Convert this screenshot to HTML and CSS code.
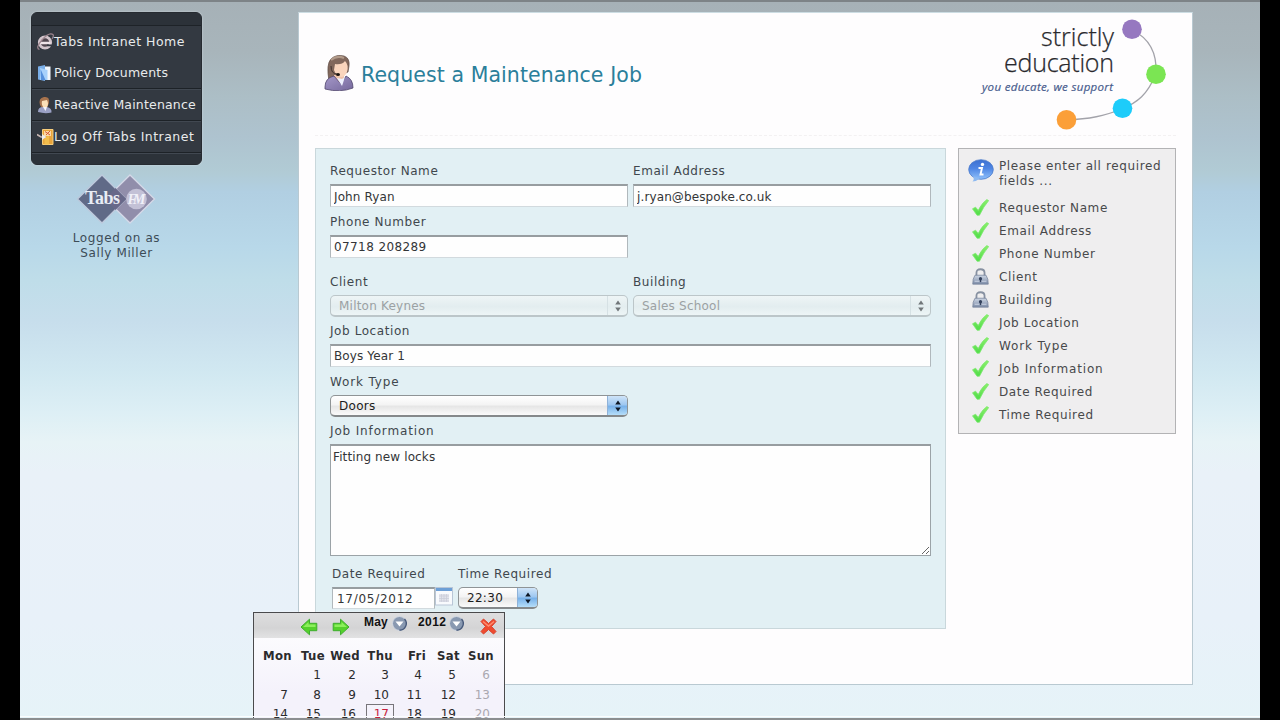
FILE: index.html
```html
<!DOCTYPE html>
<html lang="en">
<head>
<meta charset="utf-8">
<title>Request a Maintenance Job</title>
<link rel="stylesheet" href="styles.css">
</head>
<body>
<svg class="defs" width="0" height="0">
  <defs>
    <linearGradient id="green" x1="0" y1="0" x2="0" y2="1"><stop offset="0" stop-color="#8df06c"/><stop offset="1" stop-color="#4fdc48"/></linearGradient>
    <linearGradient id="purple" x1="0" y1="0" x2="1" y2="1"><stop offset="0" stop-color="#a598c8"/><stop offset="1" stop-color="#75689c"/></linearGradient>
    <linearGradient id="steel" x1="0" y1="0" x2="0" y2="1"><stop offset="0" stop-color="#ccd5e3"/><stop offset="1" stop-color="#7c8ba7"/></linearGradient>
    <linearGradient id="bubble" x1="0" y1="0" x2="0" y2="1"><stop offset="0" stop-color="#3c6fd0"/><stop offset=".45" stop-color="#4f86e4"/><stop offset="1" stop-color="#8fc0fa"/></linearGradient>
    <symbol id="tick" viewBox="0 0 17 17"><path d="M.5 9.800 3.600 8.200 6.200 11.400Q9.500 4.500 14.800.600L16.700 1.600Q11.500 7.500 7.500 16.200L5 16.200Z" fill="url(#green)" stroke="#7be86d" stroke-width=".8"/></symbol>
    <symbol id="lock" viewBox="0 0 16 16"><path d="M4.200 8V4.500Q4.200 1.200 8 1.200T11.800 4.500V8" fill="none" stroke="#8791a1" stroke-width="1.700"/><path d="M2.800 6.800H13.200Q15.500 10 15.300 15.200H.7Q.5 10 2.800 6.800Z" fill="url(#steel)" stroke="#75829a" stroke-width=".7"/><path d="M2.500 12.500H13.500" stroke="#dbe2ed" stroke-width=".7"/><circle cx="8" cy="10" r="1.500" fill="#34415c"/><path d="M7.300 11h1.400v2.300H7.300z" fill="#34415c"/></symbol>
    <symbol id="person" viewBox="0 0 30 36">
      <path d="M5 26Q2 9 7 4Q12-1 20 1Q26 3 25 11L24 17 12 22Z" fill="#82685c" stroke="#5d4a44" stroke-width=".7"/>
      <path d="M10 20H20V28H10Z" fill="#efc3aa"/>
      <path d="M11 9Q18 10 21 6Q25 10 23 17Q21 22 17 22Q12 21 10 15Z" fill="#fad5bd"/>
      <path d="M7 5Q13 0 20 3" stroke="#b29b8a" stroke-width="2" fill="none"/>
      <path d="M1 32Q1 23 10 21L17 29 22 21Q29 24 29 33Q16 38 1 34Z" fill="url(#purple)" stroke="#51466d" stroke-width=".8"/>
      <path d="M13 23 18 31 21 22 18 24Z" fill="#eef1ff"/>
      <ellipse cx="14" cy="19.500" rx="2" ry="1.600" fill="#19130f"/><path d="M7 11Q7 19 13 19" fill="none" stroke="#41332f"/>
    </symbol>
    <symbol id="drop" viewBox="0 0 15 15"><circle cx="7.500" cy="7.500" r="7" fill="#8999b1" stroke="#d3d9e2"/><path d="M7.500 14.200A6.700 6.700 0 0 0 12.500 3" fill="none" stroke="#47597a" stroke-width="1.400"/><path d="M3.500 5.500H11.500L7.500 10.500Z" fill="#fff"/></symbol>
    <symbol id="arrow" viewBox="0 0 18 18"><path d="M1 9 9.500 1.200V5.300H16.800V12.700H9.500V16.800Z" fill="#54d12c" stroke="#3fae2e"/><path d="M3 9 8.500 4V6.500H15.500V9Z" fill="#8cef5c"/></symbol>
    <symbol id="updown" viewBox="0 0 8 14"><path d="M4 1.500 6.800 5.500H1.200ZM4 12.500 6.800 8.500H1.200Z" fill="currentColor"/></symbol>
  </defs>
</svg>

<div class="stage">
  <aside class="sidebar">
    <nav class="menu">
      <div class="cap"></div>
      <a class="item spaced"><svg class="ico" viewBox="0 0 17 18"><circle cx="8" cy="9.500" r="5.700" fill="#51464f" stroke="#d3c5cc" stroke-width="2.800"/><path d="M3 10H13.500" stroke="#eee3e8" stroke-width="2.300"/><path d="M10 12.300H15" stroke="#333941" stroke-width="1.800"/><path d="M2.500 16.500Q-2 15 5 7T16 1.500Q17 3 15 6" fill="none" stroke="#9f8790" stroke-width="1.200"/></svg>Tabs Intranet Home</a>
      <a class="item"><svg class="ico" viewBox="0 0 17 18"><path d="M7 2.500H13.500V16H5Z" fill="#f1f6fb"/><path d="M1 2.500 8 1V17L1 15.500Z" fill="#79aee8"/><path d="M3 4 10.500 6V16H3Z" fill="#a7d1fb"/><path d="M3.500 5 8.500 16H4Z" fill="#5590dc"/></svg>Policy Documents</a>
      <a class="item ruled"><svg class="ico" viewBox="0 0 17 18"><path d="M3 9Q1 2 7 1T12 7L10 12H5Z" fill="#a7734d"/><path d="M5 5 10 4Q12 8 10 11L7 12Q4 9 5 5Z" fill="#fbe0b8"/><path d="M1 16Q1 11 6 11L8 13 10 11Q15 12 14.500 16.500Q8 18 1 16Z" fill="#9aa0c4"/><path d="M6 11 8.500 15 10 11Z" fill="#f4f4fa"/></svg>Reactive Maintenance</a>
      <a class="item ruled spaced"><svg class="ico" viewBox="0 0 17 18"><path d="M5.500 1.500H16V16.500H5.500Z" fill="#e9a53c" stroke="#f8ce7c"/><path d="M7 3H14V8H7Z" fill="#fbd9a6"/><path d="M8 3.500 13 7M13 3 9 7" stroke="#d65a3a"/><path d="M7.500 9 12 8V16.500H7.500Z" fill="#f2bd4c"/><path d="M0 6.500 4 9H9" fill="none" stroke="#c9b8b4" stroke-width="1.600"/><path d="M5 6 9 9 5 12Z" fill="#eee"/></svg>Log Off Tabs Intranet</a>
      <div class="cap ruled"></div>
    </nav>
    <svg class="tabs-logo" viewBox="0 0 80 50" width="80" height="50">
      <path d="M54 1 78.500 25 54 49 29.500 25Z" fill="#918eab" stroke="#d5d9e8" stroke-width="1.300"/>
      <path d="M26 1 50 25 26 49 1.500 25Z" fill="#606a87" stroke="#bec9dc" stroke-width="1.300"/>
      <path d="M39.500 14 50.500 25 39.500 36 29 25Z" fill="#68698a"/>
      <circle cx="60.500" cy="25" r="10.300" fill="#c3c1d6"/>
      <text x="9" y="30" class="tabs-word" textLength="35">Tabs</text>
      <text x="51.500" y="30" class="fm-word" textLength="18">FM</text>
    </svg>
    <div class="user">Logged on as<br>Sally Miller</div>
  </aside>

  <main class="card">
    <header class="head">
      <svg class="head-icon" width="30" height="36"><use href="#person"/></svg>
      <h1>Request a Maintenance Job</h1>
      <svg class="brand" viewBox="975 15 200 120" width="200" height="120">
        <path d="M1132 30C1153 40 1157 58 1156 74C1147 95 1138 102 1122 109C1104 116 1090 119 1066 120" fill="none" stroke="#a3a3aa" stroke-width="1.300"/>
        <circle cx="1132" cy="29.300" r="9.800" fill="#9678c0"/><circle cx="1156" cy="74.300" r="9.800" fill="#7be553"/><circle cx="1122.500" cy="108.300" r="9.800" fill="#1dccfa"/><circle cx="1066.500" cy="119.800" r="9.800" fill="#fb9f38"/>
        <text x="1041" y="46" class="brand-name" textLength="73">strictly</text>
        <text x="1004" y="72" class="brand-name" textLength="110">education</text>
        <text x="982" y="91" class="brand-tag" textLength="131">you educate, we support</text>
      </svg>
    </header>
    <div class="columns">
      <form class="form">
        <div class="pair">
          <div class="field"><label>Requestor Name</label><input value="John Ryan"></div>
          <div class="field"><label>Email Address</label><input value="j.ryan@bespoke.co.uk"></div>
        </div>
        <div class="pair phone">
          <div class="field"><label>Phone Number</label><input class="wide-digits" value="07718 208289"></div>
        </div>
        <div class="pair place">
          <div class="field"><label>Client</label><div class="select off"><span>Milton Keynes</span><i><svg width="8" height="14"><use href="#updown"/></svg></i></div></div>
          <div class="field"><label>Building</label><div class="select off"><span>Sales School</span><i><svg width="8" height="14"><use href="#updown"/></svg></i></div></div>
        </div>
        <div class="field location"><label>Job Location</label><input value="Boys Year 1"></div>
        <div class="pair work">
          <div class="field"><label class="loose">Work Type</label><div class="select"><span>Doors</span><i><svg width="8" height="14"><use href="#updown"/></svg></i></div></div>
        </div>
        <div class="field info"><label class="loose">Job Information</label><textarea>Fitting new locks</textarea></div>
        <div class="when">
          <div class="field date"><label>Date Required</label>
            <div class="date-row"><input class="date-input" value="17/05/2012"><svg width="18" height="19" viewBox="0 0 18 19"><rect x=".5" y=".5" width="17" height="17.500" fill="#f8fafd" stroke="#b9c6d6"/><path d="M1 1H17V4H1Z" fill="#6d9fd6"/><path d="M4 7H14V15H4Z" fill="#e2e4ec"/><path d="M4 9H14M4 11.500H14M4 14H14M6.500 7V15M9 7V15M11.500 7V15" stroke="#c9ccd8" stroke-width=".7"/></svg></div>
          </div>
          <div class="field time"><label>Time Required</label><div class="select"><span>22:30</span><i><svg width="8" height="14"><use href="#updown"/></svg></i></div></div>
        </div>
      </form>
      <section class="check">
        <div class="notice"><svg width="26" height="24" viewBox="0 0 26 24"><ellipse cx="13" cy="10.500" rx="12.300" ry="9.800" fill="url(#bubble)" stroke="#4e7ccb" stroke-width=".8"/><path d="M4.500 17Q7 20 4.500 22.500Q9 22 12 19.500Z" fill="#8db9f1"/><circle cx="14.500" cy="5.400" r="1.700" fill="#fff"/><path d="M10.500 9H14L12.500 15.500H15.500" fill="none" stroke="#fff" stroke-width="1.900"/></svg><p>Please enter all required fields ...</p></div>
        <ul>
          <li><svg><use href="#tick"/></svg>Requestor Name</li>
          <li><svg><use href="#tick"/></svg>Email Address</li>
          <li><svg><use href="#tick"/></svg>Phone Number</li>
          <li><svg><use href="#lock"/></svg>Client</li>
          <li><svg><use href="#lock"/></svg>Building</li>
          <li><svg><use href="#tick"/></svg>Job Location</li>
          <li class="loose"><svg><use href="#tick"/></svg>Work Type</li>
          <li class="loose"><svg><use href="#tick"/></svg>Job Information</li>
          <li><svg><use href="#tick"/></svg>Date Required</li>
          <li><svg><use href="#tick"/></svg>Time Required</li>
        </ul>
      </section>
    </div>
  </main>

  <div class="calendar">
    <div class="cal-bar">
      <svg width="18" height="18"><use href="#arrow"/></svg>
      <svg class="next" width="18" height="18"><use href="#arrow"/></svg>
      <b class="month">May</b><svg class="dd" width="15" height="15"><use href="#drop"/></svg>
      <b class="year">2012</b><svg class="dd" width="15" height="15"><use href="#drop"/></svg>
      <svg class="close" width="17" height="17" viewBox="0 0 17 17"><path d="M1 3.500 3.500 1 8.500 5.500 13.500 1 16 3.500 11.500 8.500 16 13.500 13.500 16 8.500 11.500 3.500 16 1 13.500 5.500 8.500Z" fill="#ef4b2f" stroke="#d8412d"/><path d="M3 3.500 8.500 8 14 3.500" fill="none" stroke="#ff8c70" stroke-width="1.500"/></svg>
    </div>
    <div class="days">
      <b>Mon</b><b>Tue</b><b>Wed</b><b>Thu</b><b>Fri</b><b>Sat</b><b>Sun</b>
      <span></span><span>1</span><span>2</span><span>3</span><span>4</span><span>5</span><span class="dim">6</span>
      <span>7</span><span>8</span><span>9</span><span>10</span><span>11</span><span>12</span><span class="dim">13</span>
      <span>14</span><span>15</span><span>16</span><span class="today">17</span><span>18</span><span>19</span><span class="dim">20</span>
    </div>
  </div>
  <div class="edge"></div>
</div>
</body>
</html>
```
FILE: styles.css
```css
* { box-sizing: border-box; }
body { margin: 0; background: #000; height: 720px; overflow: hidden; font: 12px/15px "DejaVu Sans", Verdana, sans-serif; color: #3f474d; }
svg { display: block; flex: none; }
.defs { position: absolute; }
.stage { position: relative; display: flex; align-items: flex-start; width: 1240px; height: 720px; margin: 0 auto; padding: 10px 0 0 11px; overflow: hidden;
  border-top: 2px solid #7d8387;
  background: linear-gradient(#a6b1b7 0, #a8b5bb 50px, #acbec6 95px, #aec3cf 135px, #b1cbd5 170px, #b1cfe2 190px, #b8d8e9 245px, #bfdde9 278px, #c7deec 320px, #d1e8f1 370px, #ddeff5 410px, #e7f3f6 440px, #e9f1f8 470px, #e8f1f9 620px, #e6f3f8 716px); }

.sidebar { width: 171px; }
.menu { height: 153px; border-radius: 6px; background: #333941; border: 1px solid #262b31; color: #e9ebec; overflow: hidden; box-shadow: 0 0 2px #d4dee4; }
.cap { height: 13px; background: #2c3239; border-bottom: 1px solid #1e2328; }
.cap.ruled { border-bottom: 0; }
.item { display: flex; align-items: center; height: 31px; padding-left: 5px; font-size: 12.5px; letter-spacing: .18px; white-space: nowrap; }
.item.ruled { height: 32px; }
.item.spaced { letter-spacing: .47px; }
.ruled { border-top: 1px solid #1d2227; box-shadow: inset 0 1px #414851; }
.ico { width: 17px; height: 18px; }
.tabs-logo { margin: 9px 0 0 45px; }
.tabs-word { font: bold 18px "Liberation Serif", serif; fill: #e8edf5; }
.fm-word { font: italic bold 14px "Liberation Serif", serif; fill: #f0f0f8; }
.user { margin: 7px 0 0; text-align: center; letter-spacing: .6px; color: #3d4c57; }

.card { width: 895px; height: 673px; margin-left: 96px; padding: 0 16px; background: #fefdfe; border: 1px solid #b9c9d1; border-top-color: #cddde3; }
.head { display: flex; align-items: flex-start; height: 123px; border-bottom: 1px dashed #f3f1f2; }
.head-icon { margin: 42px 0 0 9px; }
h1 { margin: 50px 0 0 7px; font-size: 20.500px; line-height: 25px; font-weight: 400; letter-spacing: .08px; color: #2b7f9b; white-space: nowrap; }
.brand { margin: 2px 1px 0 auto; }
.brand-name { font: 300 25px "Open Sans", sans-serif; fill: #29292d; stroke: #29292d; stroke-width: .25px; }
.brand-tag { font: italic 500 11.500px "Open Sans", sans-serif; fill: #485c8d; stroke: #485c8d; stroke-width: .2px; }

.columns { display: flex; align-items: flex-start; gap: 12px; margin-top: 12px; }
.form { width: 631px; height: 481px; padding: 12px 14px; background: #e2f0f4; border: 1px solid #c9d7db; }
.pair { display: grid; grid-template-columns: 298px 298px; gap: 5px; }
.field label { display: block; height: 23px; line-height: 20px; letter-spacing: .58px; white-space: nowrap; }
.field label.loose, li.loose { letter-spacing: .85px; }
input, textarea { display: block; width: 100%; margin: 0; padding: 1px 3px 0; font: 12px/16px "DejaVu Sans", sans-serif; color: #333537; letter-spacing: .12px; background: #fefefe; border: 1px solid #b0b8bc; border-top: 2px solid #979da0; border-bottom-color: #d2dade; border-radius: 0; outline: none; }
input { height: 23px; }
.wide-digits { padding-top: 0; letter-spacing: .4px; }
textarea { height: 112px; padding: 3px 2px 0; border: 1px solid #9ba3a7; border-top: 2px solid #979da0; resize: vertical; }
.select { display: flex; height: 22px; border: 1px solid #8f9496; border-bottom: 2px solid #85898b; border-radius: 5px; overflow: hidden; background: linear-gradient(#fff, #f4f4f4 45%, #e6e6e6 55%, #fbfbfb); color: #1c1c1c; }
.select span { flex: 1; padding-left: 8px; line-height: 20px; letter-spacing: .3px; }
.select i { display: flex; align-items: center; justify-content: center; width: 20px; color: #0d1725; background: linear-gradient(#cfe4f8, #9fc8f1 45%, #79b2ea 55%, #b5def9); border-left: 1px solid #8fb2d8; }
.select.off { color: #9ba1a3; border-color: #bcc6c9; background: linear-gradient(#eef5f6, #e3edef 55%, #edf5f6); }
.select.off span { letter-spacing: .22px; }
.select.off i { color: #707679; background: none; border-left-color: #d6e1e4; }
.phone { margin-top: 5px; }
.place { margin-top: 14px; }
.place .select.off { height: 22px; }
.location { margin-top: 4px; }
.location input { height: 23px; padding-top: 0; }
.work { margin-top: 5px; }
.info { margin-top: 4px; }
.when { display: flex; gap: 5px; margin: 8px 0 0 2px; }
.date { width: 121px; }
.date-row { display: flex; gap: 0; }
.date-input { width: 103px; height: 22px; padding-left: 4px; letter-spacing: .72px; }
.time .select { width: 80px; }

.check { width: 218px; height: 286px; padding: 10px 9px 9px; background: #efeeef; border: 1px solid #b3b3b5; color: #48494b; letter-spacing: .62px; }
.notice { display: flex; gap: 5px; }
.notice p { margin: 0; width: 170px; }
ul { list-style: none; margin: 8px 0 0; padding: 0; }
li { display: flex; align-items: center; gap: 10px; height: 23px; padding-left: 4px; white-space: nowrap; }
li svg { width: 17px; height: 17px; margin-bottom: 2px; }

.calendar { position: absolute; left: 233px; top: 610px; width: 252px; height: 130px; background: linear-gradient(#fff, #f4f2fb 80px); border: 1px solid #4a4a4c; box-shadow: 0 0 1px #fff; color: #2b2b2d; }
.cal-bar { display: flex; align-items: flex-start; height: 25px; padding: 5px 7px 0 46px; background: linear-gradient(#dededf, #d4d4d5 60%, #e2e2e3); }
.next { margin-left: 14px; transform: scaleX(-1); }
.cal-bar b { font: bold 12px/14px "Liberation Sans", Arial, sans-serif; color: #111; margin-top: -3px; }
.month { width: 29px; margin-left: 14px; letter-spacing: .2px; }
.year { width: 32px; margin-left: 10px; letter-spacing: .4px; }
.dd { margin: -2px 0 0 -1px; }
.dd + .year { margin-left: 11px; }
.close { margin-left: auto; }
.days { display: grid; grid-template-columns: 35px 33px 35px 33px 33px 34px 34px; grid-template-rows: 27px 19.500px 19.500px 19.500px; padding-left: 3px; text-align: right; line-height: 20px; }
.days b { line-height: 36px; font-size: 11.700px; letter-spacing: .35px; }
.days span { padding-right: 4px; }
.days .dim { color: #aaa8b0; }
.days .today { margin: 0 -1px 0 6px; padding-right: 4px; border: 1px solid #77757a; color: #c81f3e; line-height: 18px; }
.edge { position: absolute; left: 0; right: 0; bottom: 0; height: 4px; border-top: 1px solid #fbfdfe; border-bottom: 2px solid #8b8e90; }
```
